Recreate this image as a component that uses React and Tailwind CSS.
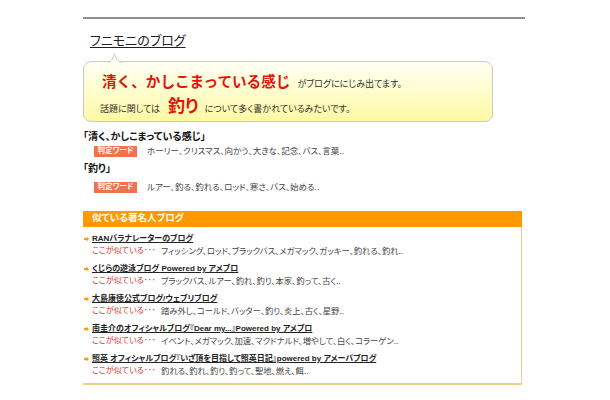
import React from 'react';

const font = "font-['Liberation_Sans','Noto_Sans_CJK_JP',sans-serif] [font-feature-settings:'palt']";

const blogs = [
    {
        title: 'RANバラナレーターのブログ',
        words: 'フィッシング、ロッド、ブラックバス、メガマック、ガッキー、釣れる、釣れ..',
    },
    {
        title: 'くじらの遊泳ブログ Powered by アメブロ',
        words: 'ブラックバス、ルアー、釣れ、釣り、本家、釣って、古く..',
    },
    {
        title: '大島康徳公式ブログ/ウェブリブログ',
        words: '踏み外し、コールド、バッター、釣り、炎上、古く、星野..',
    },
    {
        title: '南圭介のオフィシャルブログ『Dear my...』Powered by アメブロ',
        words: 'イベント、メガマック、加速、マクドナルド、増やして、白く、コラーゲン..',
    },
    {
        title: '照英 オフィシャルブログ『いざ頂を目指して照英日記』powered by アメーバブログ',
        words: '釣れる、釣れ、釣り、釣って、聖地、燃え、餌..',
    },
];

const Badge = () => (
    <span className="inline-flex items-center justify-center shrink-0 w-[43px] h-[11px] bg-[#f2714f] text-white text-[7.5px] font-bold leading-none">
        判定ワード
    </span>
);

const Arrow = () => (
    <svg width="5" height="6" viewBox="0 0 5 6" className="shrink-0">
        <path d="M0 2 H2.5 V0.5 L5 3 L2.5 5.5 V4 H0 Z" fill="#f5a000" />
    </svg>
);

export default function App() {
    return (
        <div className={`w-[610px] h-[400px] bg-white overflow-hidden text-[#333] ${font}`}>
            <div className="ml-[83px] w-[442px] pt-[17px]">
                <div className="h-[1.5px] bg-[#8f8f8f]"></div>

                <div className="mt-[15px] ml-[7px] h-[14px] leading-[14px] text-[13px] text-[#222] underline underline-offset-2">
                    フニモニのブログ
                </div>

                {/* speech bubble */}
                <div className="relative mt-[13px] w-[410px] h-[61px] rounded-[8px] border border-[#c9c9c9] bg-gradient-to-b from-[#fffff4] to-[#fff9a2] pt-[9px] pl-[18px]">
                    <svg width="14" height="10" viewBox="0 0 14 10" className="absolute left-[24px] top-[-9px]">
                        <path d="M0 9.5 C4 8.5 5 5 6.5 0.5 C7.5 5 9.5 8.5 14 9.5" fill="#fffff4" stroke="#c9c9c9" strokeWidth="1" />
                    </svg>
                    <div className="flex items-baseline h-[22px] leading-[22px]">
                        <span className="text-[14.6px] font-bold text-[#e3140a] [font-feature-settings:normal]">清く、かしこまっている感じ</span>
                        <span className="ml-[7px] text-[9px] text-[#333]">がブログににじみ出てます。</span>
                    </div>
                    <div className="flex items-baseline h-[22px] leading-[22px] mt-[3px] -ml-[2px]">
                        <span className="text-[9px] text-[#333]">話題に関しては</span>
                        <span className="ml-[8px] text-[17px] font-bold text-[#e3140a]">釣り</span>
                        <span className="ml-[6px] text-[9px] text-[#333]">について多く書かれているみたいです。</span>
                    </div>
                </div>

                <div className="mt-[9px] h-[12px] leading-[12px] text-[10px] font-bold text-[#111]">「清く、かしこまっている感じ」</div>
                <div className="mt-[3px] ml-[11px] flex items-center h-[11px]">
                    <Badge />
                    <span className="ml-[10px] text-[8.5px] text-[#444]">ホーリー、クリスマス、向かう、大きな、記念、バス、言葉..</span>
                </div>

                <div className="mt-[6.5px] h-[12px] leading-[12px] text-[10px] font-bold text-[#111]">「釣り」</div>
                <div className="mt-[6.5px] ml-[11px] flex items-center h-[11px]">
                    <Badge />
                    <span className="ml-[10px] text-[8.5px] text-[#444]">ルアー、釣る、釣れる、ロッド、寒さ、バス、始める..</span>
                </div>

                {/* similar famous blogs */}
                <div className="mt-[18px] w-[439px]">
                    <div className="h-[16px] bg-[#ff9900] pl-[9px] flex items-center text-white text-[9.5px] font-bold">
                        似ている著名人ブログ
                    </div>
                    <div className="border-r border-b-2 border-[#efcf8c] pt-[6px]">
                        {blogs.map((b) => (
                            <div key={b.title} className="h-[30px]">
                                <div className="flex items-center h-[12.5px] pl-[1px] gap-[3px]">
                                    <Arrow />
                                    <span className="text-[8px] font-bold text-[#222] underline underline-offset-1 whitespace-nowrap">{b.title}</span>
                                </div>
                                <div className="flex items-center h-[12.5px] pl-[9px] whitespace-nowrap">
                                    <span className="shrink-0 w-[69px] text-[8px] text-[#d23b30]">ここが似ている･･･</span>
                                    <span className="text-[8.3px] text-[#444]">{b.words}</span>
                                </div>
                            </div>
                        ))}
                    </div>
                </div>
            </div>
        </div>
    );
}
